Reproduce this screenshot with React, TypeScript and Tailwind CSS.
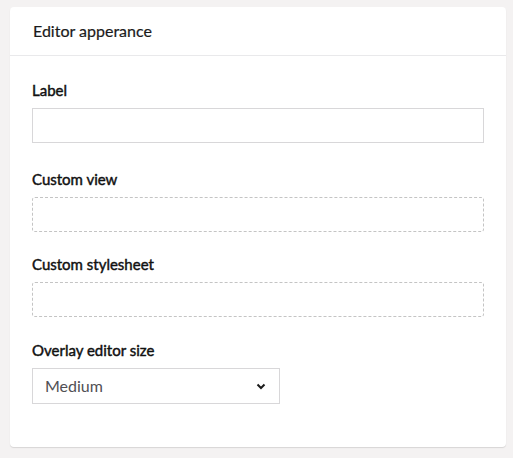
import React from 'react';

const Field: React.FC<{ label: string; className?: string; children: React.ReactNode }> = ({ label, className, children }) => (
  <div className={className ?? 'mb-[22px]'}>
    <div className="text-[15px] leading-5 text-[#111] [-webkit-text-stroke:0.45px_#111] mb-[8px]">{label}</div>
    {children}
  </div>
);

const App: React.FC = () => {
  return (
    <div className="min-h-[458px] bg-[#f4f2f2] pt-[7px] pl-[10px] pr-[7px] pb-[10px]" style={{ fontFamily: 'Lato, "Open Sans", sans-serif' }}>
      <div className="bg-white rounded-[4px] shadow-[0_1px_1px_rgba(0,0,0,0.12)]">
        {/* header */}
        <div className="h-[49px] flex items-center px-[23px] border-b border-[#e9e9eb]">
          <span className="text-[16px] text-[#1b1b1b] [-webkit-text-stroke:0.2px_#1b1b1b]">Editor apperance</span>
        </div>

        <div className="px-[22px] pt-[24px] pb-[21px]">
          <Field label="Label" className="mb-[26px]">
            <input className="block w-full h-[35px] border border-[#d8d7d9] bg-white outline-none" />
          </Field>

          <Field label="Custom view">
            <div className="h-[35px] border border-dashed border-[#c4c4c4] rounded-[3px]" />
          </Field>

          <Field label="Custom stylesheet" className="mb-[23px]">
            <div className="h-[35px] border border-dashed border-[#c4c4c4] rounded-[3px]" />
          </Field>

          <Field label="Overlay editor size">
            <div className="w-[248px] h-[36px] border border-[#d8d7d9] flex items-center justify-between pl-[12px] pr-[13px]">
              <span className="text-[16px] text-[#515054]">Medium</span>
              <svg width="10" height="7" viewBox="0 0 10 7" fill="none">
                <path d="M1.5 1.5 5 5l3.5-3.5" stroke="#1b1b1b" strokeWidth="2" />
              </svg>
            </div>
          </Field>
        </div>
      </div>
    </div>
  );
};

export default App;
